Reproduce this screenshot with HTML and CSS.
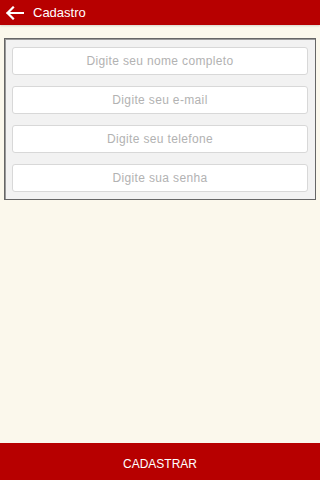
FILE: index.html
```html
<!DOCTYPE html>
<html lang="pt">
<head>
<meta charset="utf-8">
<link rel="stylesheet" href="styles.css">
</head>
<body>
<div class="app">
  <header class="topbar">
    <svg class="back" width="19" height="14" viewBox="0 0 19 14"><path d="M18 7H2.5M8 1.5L2.5 7l5.5 5.5" fill="none" stroke="#fff" stroke-width="2.2" stroke-linecap="square"/></svg>
    <span class="title">Cadastro</span>
  </header>
  <main class="content">
    <form class="form">
      <input class="field" type="text" placeholder="Digite seu nome completo">
      <input class="field" type="text" placeholder="Digite seu e-mail">
      <input class="field" type="text" placeholder="Digite seu telefone">
      <input class="field" type="password" placeholder="Digite sua senha">
    </form>
  </main>
  <footer class="bottombar">CADASTRAR</footer>
</div>
</body>
</html>
```
FILE: styles.css
```css
html, body { margin: 0; padding: 0; }
body { background: #fbf8ec; font-family: "Liberation Sans", Arial, sans-serif; }
.app { width: 320px; height: 480px; display: flex; flex-direction: column; }
.topbar {
  height: 25px; background: #b70000; display: flex; align-items: center;
  padding-left: 5px; gap: 9px; box-shadow: 0 1px 2px rgba(0,0,0,0.15);
}
.back { display: block; }
.title { color: #fff; font-size: 13px; }
.content { flex: 1; padding: 13px 4px 0 4px; }
.form {
  background: #f2f2f2; border: 1px solid #666; box-shadow: inset 1px 1px 0 #999;
  padding: 8px 7px 7px 7px; display: flex; flex-direction: column; gap: 11px;
  margin: 0;
}
.field {
  height: 28px; box-sizing: border-box; border: 1px solid #d8d8d8; border-radius: 3px;
  background: #fff; text-align: center; font-family: "Liberation Sans", Arial, sans-serif;
  font-size: 12px; letter-spacing: 0.35px; color: #555; padding: 0; margin: 0; outline: none;
}
.field::placeholder { color: #b2b2b2; }
.bottombar {
  height: 37px; box-sizing: border-box; padding-top: 5px; background: #b70000; color: #fff; font-size: 12px;
  display: flex; align-items: center; justify-content: center;
}
```
